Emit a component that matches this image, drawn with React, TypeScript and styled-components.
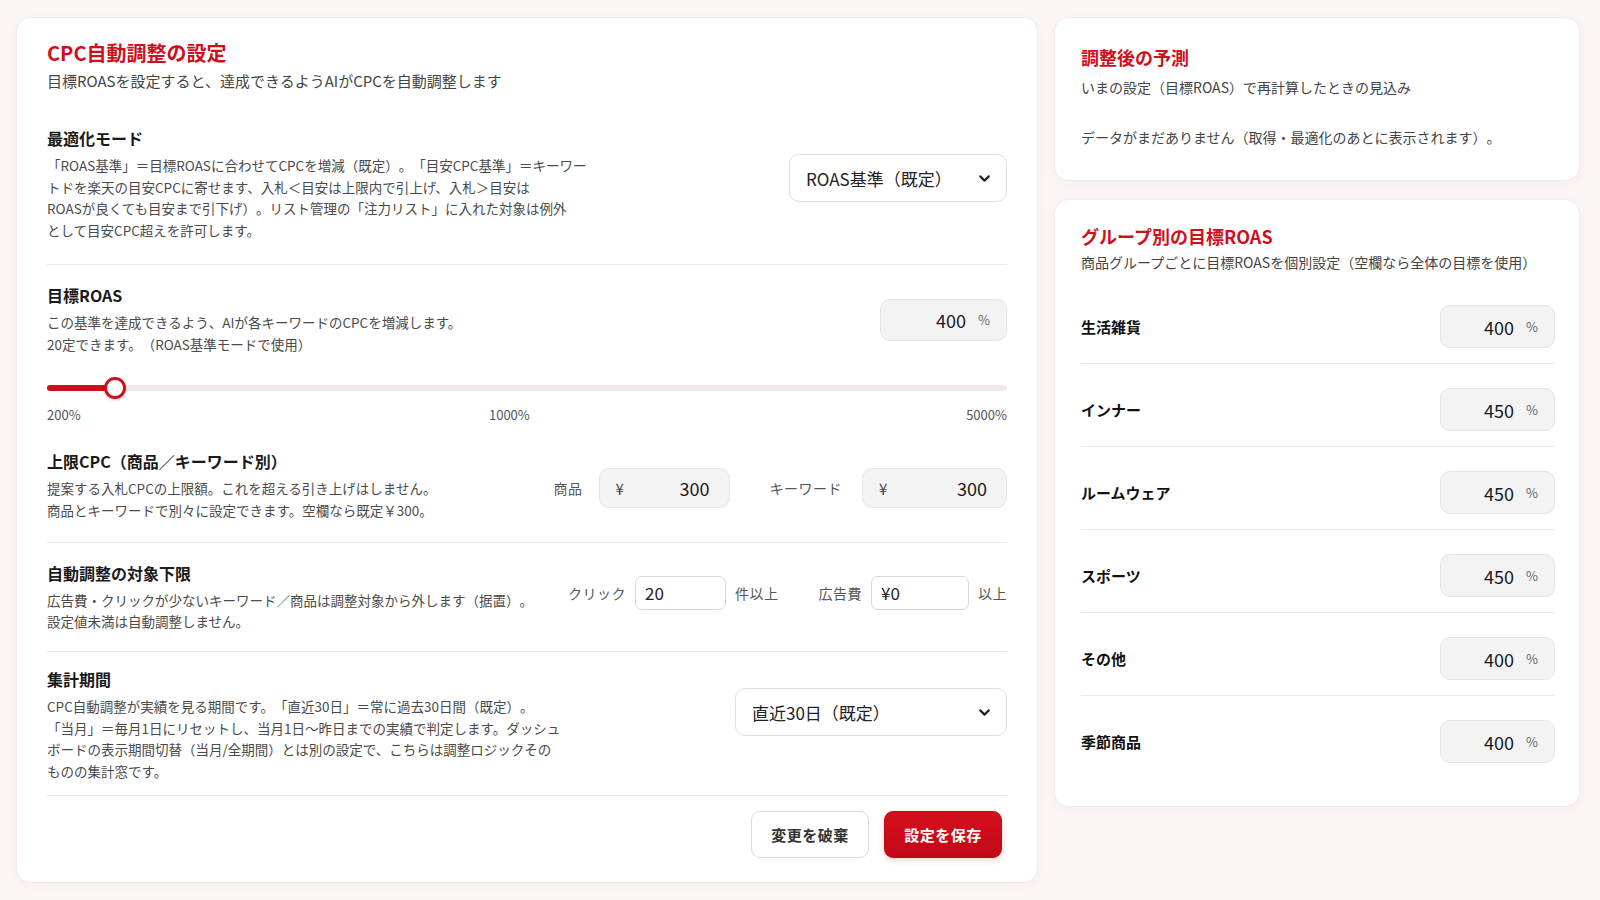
import React from 'react';
import styled, { createGlobalStyle } from 'styled-components';
import { ChevronDown } from 'lucide-react';

const RED = '#d00f1c';

const GlobalStyle = createGlobalStyle`
  * { box-sizing: border-box; }
  body {
    margin: 0;
    background: #fbf6f6;
    font-family: "Noto Sans CJK JP", "Noto Sans", sans-serif;
    color: #222;
    text-spacing-trim: space-all;
  }
`;

const Page = styled.div`
  display: grid;
  grid-template-columns: 1020px 524px;
  column-gap: 18px;
  align-items: start;
  padding: 18px 21px 20px 17px;
`;

const Card = styled.section<{ $pad: string }>`
  background: #fff;
  border-radius: 14px;
  box-shadow: 0 2px 12px rgba(170, 110, 110, 0.08), 0 0 0 1px rgba(200, 170, 170, 0.08);
  padding: ${p => p.$pad};
`;

const SideColumn = styled.div`
  display: flex;
  flex-direction: column;
  gap: 20px;
`;

const CardTitle = styled.h1<{ $size: number }>`
  margin: 0;
  color: ${RED};
  font-size: ${p => p.$size}px;
  line-height: 26px;
  font-weight: 700;
`;

const CardLead = styled.p<{ $size: number; $mt: number }>`
  margin: ${p => p.$mt}px 0 0;
  font-size: ${p => p.$size}px;
  line-height: 22px;
  color: #444;
`;

const EmptyNote = styled.p`
  margin: 28px 0 0;
  font-size: 14px;
  line-height: 22px;
  color: #444;
`;

const Sections = styled.div`
  margin-top: 16px;
`;

const Section = styled.div<{ $pt: number; $pb: number; $divider?: boolean }>`
  padding: ${p => p.$pt}px 0 ${p => p.$pb}px;
  border-bottom: ${p => (p.$divider ? '1px solid #ebe7e7' : 'none')};
`;

const SectionRow = styled.div`
  display: flex;
  justify-content: space-between;
  align-items: flex-start;
  gap: 24px;
`;

const SectionTitle = styled.h2`
  margin: 0;
  font-size: 16px;
  line-height: 22px;
  font-weight: 700;
  color: #1a1a1a;
`;

const Desc = styled.p`
  margin: 6px 0 0;
  font-size: 13.5px;
  line-height: 21.7px;
  color: #4a4a4a;
  white-space: nowrap;
`;

const Controls = styled.div<{ $top: number; $gap?: number }>`
  margin-top: ${p => p.$top}px;
  display: flex;
  align-items: center;
  gap: ${p => p.$gap ?? 0}px;
`;

const FieldGroup = styled.div<{ $gap: number }>`
  display: flex;
  align-items: center;
  gap: ${p => p.$gap}px;
`;

const FieldLabel = styled.span`
  font-size: 14px;
  color: #555;
  letter-spacing: 0.5px;
  white-space: nowrap;
`;

const SelectBox = styled.button<{ $w: number }>`
  width: ${p => p.$w}px;
  height: 48px;
  display: flex;
  align-items: center;
  justify-content: space-between;
  padding: 0 13px 0 16px;
  background: #fff;
  border: 1px solid #e2dfdf;
  border-radius: 10px;
  font-family: inherit;
  font-size: 17px;
  color: #222;
  cursor: pointer;
`;

const NumberBox = styled.div<{ $w: number; $h: number }>`
  width: ${p => p.$w}px;
  height: ${p => p.$h}px;
  display: flex;
  align-items: center;
  padding: 0 16px;
  background: #f4f3f3;
  border: 1px solid #e6e3e3;
  border-radius: 10px;
`;

const Prefix = styled.span`
  font-size: 15px;
  color: #444;
`;

const NumberInput = styled.input`
  flex: 1;
  min-width: 0;
  border: none;
  background: transparent;
  font-family: inherit;
  font-size: 18px;
  color: #1a1a1a;
  text-align: right;
  outline: none;
  padding: 0;
`;

const Unit = styled.span`
  margin-left: 12px;
  font-size: 13px;
  color: #666;
`;

const PlainInput = styled.input<{ $w: number }>`
  width: ${p => p.$w}px;
  height: 34px;
  padding: 0 9px;
  border: 1px solid #dcd8d8;
  border-radius: 7px;
  background: #fff;
  font-family: inherit;
  font-size: 17px;
  color: #222;
  outline: none;
`;

const SliderTrack = styled.div`
  position: relative;
  margin-top: 22px;
  height: 22px;
  display: flex;
  align-items: center;
`;

const TrackRail = styled.div`
  width: 100%;
  height: 6px;
  border-radius: 3px;
  background: #efe7e8;
`;

const TrackFill = styled.div`
  position: absolute;
  left: 0;
  top: 8px;
  height: 6px;
  border-radius: 3px;
  background: ${RED};
`;

const Thumb = styled.div`
  position: absolute;
  top: 0;
  width: 22px;
  height: 22px;
  margin-left: -11px;
  border-radius: 50%;
  background: #fff;
  border: 3px solid ${RED};
  box-shadow: 0 1px 3px rgba(0, 0, 0, 0.2);
`;

const ScaleLabels = styled.div`
  margin-top: 7px;
  display: flex;
  justify-content: space-between;
  font-size: 13px;
  line-height: 18px;
  color: #555;
`;

const MidMark = styled.span`
  margin-right: 28px;
`;

const Footer = styled.div`
  padding: 15px 5px 0 0;
  display: flex;
  justify-content: flex-end;
  gap: 15px;
`;

const Button = styled.button<{ $primary?: boolean }>`
  width: 118px;
  height: 47px;
  border-radius: 9px;
  font-family: inherit;
  font-size: 15px;
  font-weight: 700;
  letter-spacing: 0.5px;
  cursor: pointer;
  border: 1px solid ${p => (p.$primary ? '#c10a17' : '#ddd9d9')};
  background: ${p => (p.$primary ? 'linear-gradient(180deg, #d40f1d 0%, #c20816 100%)' : '#fff')};
  color: ${p => (p.$primary ? '#fff' : '#333')};
  box-shadow: ${p => (p.$primary ? '0 2px 6px rgba(200, 10, 20, 0.2)' : 'none')};
`;

const GroupList = styled.div`
  margin-top: 8px;
`;

const GroupRow = styled.div`
  display: flex;
  align-items: center;
  justify-content: space-between;
  padding: 24px 0 15px;
  border-bottom: 1px solid #ebe7e7;

  &:last-child {
    border-bottom: none;
  }
`;

const GroupName = styled.span`
  font-size: 15px;
  font-weight: 700;
  color: #111;
`;

const groups = [
  { name: '生活雑貨', roas: 400 },
  { name: 'インナー', roas: 450 },
  { name: 'ルームウェア', roas: 450 },
  { name: 'スポーツ', roas: 450 },
  { name: 'その他', roas: 400 },
  { name: '季節商品', roas: 400 },
];

// slider position of the current target ROAS (stepped scale, 400% sits near the start)
const sliderPct = 7.1;

const Select: React.FC<{ label: string; width: number }> = ({ label, width }) => (
  <SelectBox $w={width}>
    <span>{label}</span>
    <ChevronDown size={17} strokeWidth={3} color="#222" />
  </SelectBox>
);

const PercentField: React.FC<{ value: number; width: number; height: number }> = ({ value, width, height }) => (
  <NumberBox $w={width} $h={height}>
    <NumberInput defaultValue={value} />
    <Unit>%</Unit>
  </NumberBox>
);

const YenField: React.FC<{ value: number; width: number }> = ({ value, width }) => (
  <NumberBox $w={width} $h={40} style={{ paddingRight: 19 }}>
    <Prefix>¥</Prefix>
    <NumberInput defaultValue={value} />
  </NumberBox>
);

export default function App() {
  return (
    <>
      <GlobalStyle />
      <Page>
        <Card $pad="22px 30px 24px">
          <CardTitle $size={20}>CPC自動調整の設定</CardTitle>
          <CardLead $size={15} $mt={4}>目標ROASを設定すると、達成できるようAIがCPCを自動調整します</CardLead>

          <Sections>
            <Section $pt={19} $pb={22} $divider>
              <SectionRow>
                <div>
                  <SectionTitle>最適化モード</SectionTitle>
                  <Desc>
                    「ROAS基準」＝目標ROASに合わせてCPCを増減（既定）。「目安CPC基準」＝キーワー<br />
                    トドを楽天の目安CPCに寄せます、入札＜目安は上限内で引上げ、入札＞目安は<br />
                    ROASが良くても目安まで引下げ）。リスト管理の「注力リスト」に入れた対象は例外<br />
                    として目安CPC超えを許可します。
                  </Desc>
                </div>
                <Controls $top={27}>
                  <Select label="ROAS基準（既定）" width={218} />
                </Controls>
              </SectionRow>
            </Section>

            <Section $pt={19} $pb={7}>
              <SectionRow>
                <div>
                  <SectionTitle>目標ROAS</SectionTitle>
                  <Desc>
                    この基準を達成できるよう、AIが各キーワードのCPCを増減します。<br />
                    20定できます。（ROAS基準モードで使用）
                  </Desc>
                </div>
                <Controls $top={15}>
                  <PercentField value={400} width={127} height={42} />
                </Controls>
              </SectionRow>
              <SliderTrack>
                <TrackRail />
                <TrackFill style={{ width: `${sliderPct}%` }} />
                <Thumb style={{ left: `${sliderPct}%` }} />
              </SliderTrack>
              <ScaleLabels>
                <span>200%</span>
                <MidMark>1000%</MidMark>
                <span>5000%</span>
              </ScaleLabels>
            </Section>

            <Section $pt={19} $pb={20} $divider>
              <SectionRow>
                <div>
                  <SectionTitle>上限CPC（商品／キーワード別）</SectionTitle>
                  <Desc>
                    提案する入札CPCの上限額。これを超える引き上げはしません。<br />
                    商品とキーワードで別々に設定できます。空欄なら既定￥300。
                  </Desc>
                </div>
                <Controls $top={18} $gap={40}>
                  <FieldGroup $gap={16}>
                    <FieldLabel>商品</FieldLabel>
                    <YenField value={300} width={131} />
                  </FieldGroup>
                  <FieldGroup $gap={20}>
                    <FieldLabel>キーワード</FieldLabel>
                    <YenField value={300} width={145} />
                  </FieldGroup>
                </Controls>
              </SectionRow>
            </Section>

            <Section $pt={19} $pb={18} $divider>
              <SectionRow>
                <div>
                  <SectionTitle>自動調整の対象下限</SectionTitle>
                  <Desc>
                    広告費・クリックが少ないキーワード／商品は調整対象から外します（据置）。<br />
                    設定値未満は自動調整しません。
                  </Desc>
                </div>
                <Controls $top={14} $gap={40}>
                  <FieldGroup $gap={9}>
                    <FieldLabel>クリック</FieldLabel>
                    <PlainInput $w={91} defaultValue="20" />
                    <FieldLabel>件以上</FieldLabel>
                  </FieldGroup>
                  <FieldGroup $gap={9}>
                    <FieldLabel>広告費</FieldLabel>
                    <PlainInput $w={98} defaultValue="¥0" />
                    <FieldLabel>以上</FieldLabel>
                  </FieldGroup>
                </Controls>
              </SectionRow>
            </Section>

            <Section $pt={16} $pb={12} $divider>
              <SectionRow>
                <div>
                  <SectionTitle>集計期間</SectionTitle>
                  <Desc>
                    CPC自動調整が実績を見る期間です。「直近30日」＝常に過去30日間（既定）。<br />
                    「当月」＝毎月1日にリセットし、当月1日〜昨日までの実績で判定します。ダッシュ<br />
                    ボードの表示期間切替（当月/全期間）とは別の設定で、こちらは調整ロジックその<br />
                    ものの集計窓です。
                  </Desc>
                </div>
                <Controls $top={20}>
                  <Select label="直近30日（既定）" width={272} />
                </Controls>
              </SectionRow>
            </Section>
          </Sections>

          <Footer>
            <Button>変更を破棄</Button>
            <Button $primary>設定を保存</Button>
          </Footer>
        </Card>

        <SideColumn>
          <Card $pad="26px 26px 32px">
            <CardTitle $size={18}>調整後の予測</CardTitle>
            <CardLead $size={14} $mt={6}>いまの設定（目標ROAS）で再計算したときの見込み</CardLead>
            <EmptyNote>データがまだありません（取得・最適化のあとに表示されます）。</EmptyNote>
          </Card>

          <Card $pad="23px 24px 28px 26px">
            <CardTitle $size={18}>グループ別の目標ROAS</CardTitle>
            <CardLead $size={14} $mt={2}>商品グループごとに目標ROASを個別設定（空欄なら全体の目標を使用）</CardLead>
            <GroupList>
              {groups.map(g => (
                <GroupRow key={g.name}>
                  <GroupName>{g.name}</GroupName>
                  <PercentField value={g.roas} width={115} height={43} />
                </GroupRow>
              ))}
            </GroupList>
          </Card>
        </SideColumn>
      </Page>
    </>
  );
}
